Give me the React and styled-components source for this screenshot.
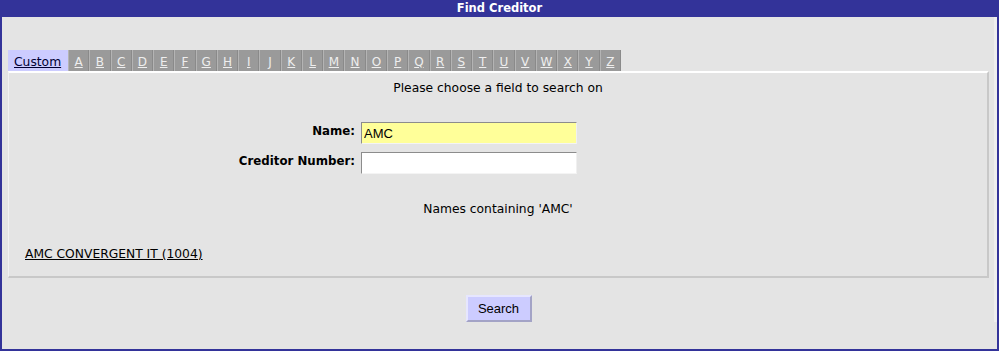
import React from "react"
import styled, { createGlobalStyle } from "styled-components"

const letters = "ABCDEFGHIJKLMNOPQRSTUVWXYZ".split("")

const GlobalStyle = createGlobalStyle`
  body {
    margin: 0;
    background: #ffffff;
    font-family: "DejaVu Sans", Verdana, sans-serif;
  }
`

export default function App() {
  return (
    <>
      <GlobalStyle />
      <Frame>
        <TitleBar>Find Creditor</TitleBar>
        <Body>
          <TabRow>
            <CustomTab href="#">Custom</CustomTab>
            {letters.map((l) => (
              <LetterTab key={l} href="#">{l}</LetterTab>
            ))}
          </TabRow>
          <Panel>
            <Prompt>Please choose a field to search on</Prompt>
            <FormGrid>
              <Label>Name:</Label>
              <Field $bg="#ffff99" defaultValue="AMC" />
              <Label>Creditor Number:</Label>
              <Field $bg="#ffffff" defaultValue="" />
            </FormGrid>
            <Result>Names containing 'AMC'</Result>
            <ResultLink href="#">AMC CONVERGENT IT (1004)</ResultLink>
          </Panel>
          <ButtonRow>
            <SearchButton>Search</SearchButton>
          </ButtonRow>
        </Body>
      </Frame>
    </>
  )
}

const Frame = styled.div`
  width: 999px;
  height: 351px;
  box-sizing: border-box;
  border: 2px solid #333399;
  border-top: none;
  background: #e4e4e4;
  display: flex;
  flex-direction: column;
`

const TitleBar = styled.div`
  height: 17px;
  margin: 0 -2px;
  background: #333399;
  color: #ffffff;
  font-weight: bold;
  font-size: 11.5px;
  line-height: 16px;
  text-align: center;
`

const Body = styled.div`
  padding: 33px 5px 0 6px;
  border-right: 3px solid #eeeeee;
`

const TabRow = styled.div`
  display: flex;
  height: 21px;
`

const CustomTab = styled.a`
  display: flex;
  align-items: center;
  box-sizing: border-box;
  width: 60px;
  padding: 2px 0 0 6px;
  background: #ccccff;
  color: #000033;
  font-size: 12.3px;
  text-decoration: underline;
`

const LetterTab = styled.a`
  display: flex;
  align-items: center;
  justify-content: center;
  box-sizing: border-box;
  width: 21.27px;
  padding-top: 2px;
  background: #9a9a9a;
  border-left: 1px solid #b4b4b4;
  border-right: 1px solid #8a8a8a;
  color: #eeeeee;
  font-size: 12px;
  text-decoration: underline;
`

const Panel = styled.div`
  display: flex;
  flex-direction: column;
  height: 207px;
  box-sizing: border-box;
  border-top: 2px solid #ffffff;
  border-left: 1px solid #f2f2f2;
  border-right: 2px solid #c8c8c8;
  border-bottom: 2px solid #c8c8c8;
  padding-top: 8px;
  font-size: 12.3px;
  color: #000000;
`

const Prompt = styled.div`
  line-height: 15px;
  text-align: center;
`

const FormGrid = styled.div`
  display: grid;
  grid-template-columns: 346px 216px;
  column-gap: 6px;
  row-gap: 8px;
  margin-top: 26px;
  align-items: center;
`

const Label = styled.div`
  text-align: right;
  font-weight: bold;
  font-size: 11.8px;
  margin-top: -5px;
`

const Field = styled.input`
  box-sizing: border-box;
  height: 22px;
  width: 216px;
  margin: 0;
  padding: 1px 2px 0;
  background: ${(p) => p.$bg};
  border: 1px solid;
  border-color: #8c8c8c #f0f0f0 #f4f4f4 #8c8c8c;
  font-family: "Liberation Sans", Arial, sans-serif;
  font-size: 13px;
  color: #000000;
  outline: none;
`

const Result = styled.div`
  margin-top: 28px;
  line-height: 15px;
  text-align: center;
`

const ResultLink = styled.a`
  margin: 30px 0 0 16px;
  line-height: 15px;
  color: #000000;
  text-decoration: underline;
  align-self: flex-start;
`

const ButtonRow = styled.div`
  display: flex;
  justify-content: center;
  margin-top: 17px;
`

const SearchButton = styled.button`
  width: 66px;
  height: 27px;
  box-sizing: border-box;
  background: #ccccff;
  border: 2px solid;
  border-color: #e6e6ff #a3a3c6 #a3a3c6 #e6e6ff;
  font-family: "Liberation Sans", Arial, sans-serif;
  font-size: 13px;
  color: #000000;
  padding: 0;
`
